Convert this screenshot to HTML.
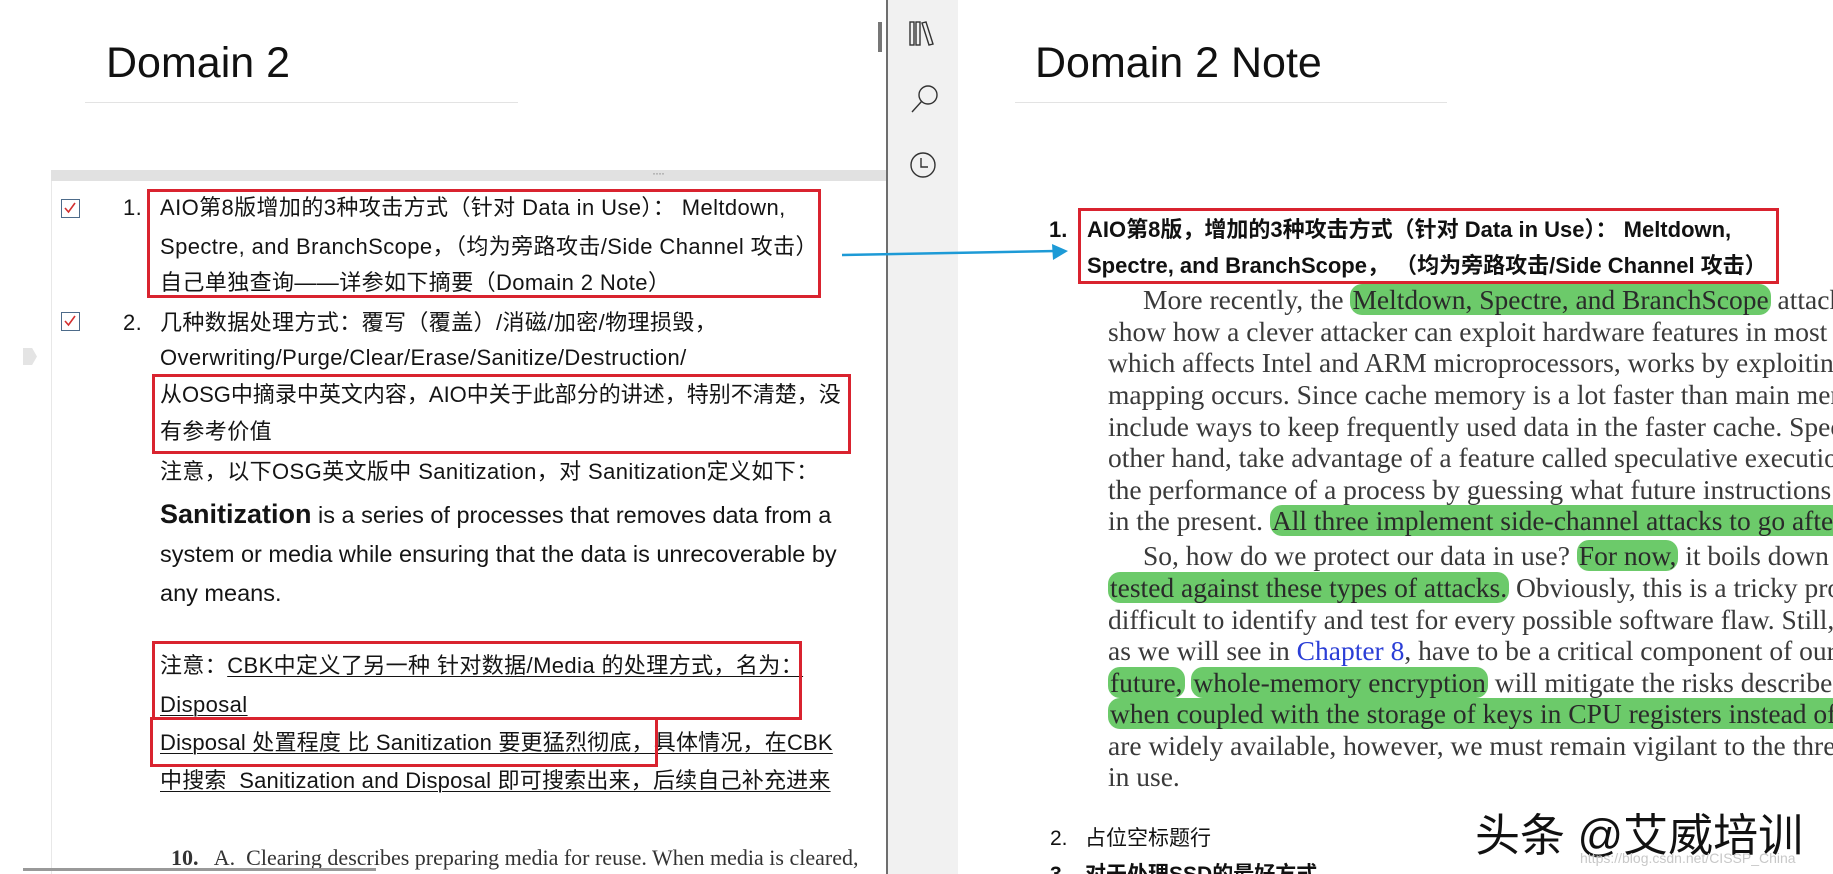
<!DOCTYPE html>
<html><head><meta charset="utf-8">
<style>
*{margin:0;padding:0;box-sizing:border-box}
body{width:1833px;height:874px;overflow:hidden;background:#fff;position:relative;font-family:"Liberation Sans","Noto Sans CJK SC",sans-serif;color:#111}
.a{position:absolute;white-space:nowrap}
.l{position:absolute;left:160px;font-size:22px;letter-spacing:0.4px;line-height:30px;white-space:nowrap;color:#141414}
.box{position:absolute;border:3px solid #d9232f}
.s{position:absolute;left:1108px;font-family:"Liberation Serif",serif;font-size:27.5px;line-height:30px;color:#3a3a3a;white-space:nowrap}
.g{background:#6cca6a;border-radius:12px;padding:0 2px;color:#2a2a2a}
.cb{position:absolute;left:61px;width:19px;height:19px;border:1.5px solid #4d6b8a;background:#fff}
u{text-decoration-thickness:1px;text-underline-offset:3px}
</style></head><body>
<div class="a" style="left:106px;top:38px;font-size:43px;line-height:50px;color:#111">Domain 2</div>
<div class="a" style="left:85px;top:102px;width:433px;height:1px;background:#e3e3e3"></div>
<div class="a" style="left:878px;top:22px;width:4px;height:30px;background:#777"></div>
<div class="a" style="left:51px;top:170px;width:836px;height:11px;background:#e1e1e1"></div>
<div class="a" style="left:652px;top:166px;font-size:12px;color:#888;letter-spacing:-1px">····</div>
<div class="a" style="left:51px;top:181px;width:1px;height:693px;background:#e8e8e8"></div>
<div class="a" style="left:23px;top:348px;width:14px;height:17px;background:#e4e4e4;clip-path:polygon(0 0,65% 0,100% 50%,65% 100%,0 100%)"></div>

<div class="cb" style="top:199px"><svg width="16" height="16" viewBox="0 0 16 16" style="position:absolute;left:0;top:0"><path d="M3 8 L6.5 12 L13 3" stroke="#d32f2f" stroke-width="1.6" fill="none"/></svg></div>
<div class="cb" style="top:312px"><svg width="16" height="16" viewBox="0 0 16 16" style="position:absolute;left:0;top:0"><path d="M3 8 L6.5 12 L13 3" stroke="#d32f2f" stroke-width="1.6" fill="none"/></svg></div>
<div class="l" style="left:123px;top:193px">1.</div>
<div class="l" style="left:123px;top:308px">2.</div>

<div class="l" style="top:193px">AIO第8版增加的3种攻击方式（针对 Data in Use）： Meltdown,</div>
<div class="l" style="top:232px">Spectre, and BranchScope，（均为旁路攻击/Side Channel 攻击）</div>
<div class="l" style="top:268px">自己单独查询——详参如下摘要（Domain 2 Note）</div>
<div class="l" style="top:308px">几种数据处理方式：覆写（覆盖）/消磁/加密/物理损毁，</div>
<div class="l" style="top:343px">Overwriting/Purge/Clear/Erase/Sanitize/Destruction/</div>
<div class="l" style="top:380px;letter-spacing:0">从OSG中摘录中英文内容，AIO中关于此部分的讲述，特别不清楚，没</div>
<div class="l" style="top:417px">有参考价值</div>
<div class="l" style="top:457px">注意，以下OSG英文版中 Sanitization，对 Sanitization定义如下：</div>
<div class="l" style="top:499px;font-size:23.5px;letter-spacing:0"><b style="font-size:27px">Sanitization</b> is a series of processes that removes data from a</div>
<div class="l" style="top:539px;font-size:23.5px;letter-spacing:0">system or media while ensuring that the data is unrecoverable by</div>
<div class="l" style="top:578px;font-size:23.5px;letter-spacing:0">any means.</div>
<div class="l" style="top:651px">注意：<u>CBK中定义了另一种 针对数据/Media 的处理方式，名为：</u></div>
<div class="l" style="top:690px"><u>Disposal</u></div>
<div class="l" style="top:728px;letter-spacing:0.2px"><u>Disposal 处置程度 比 Sanitization 要更猛烈彻底，具体情况，在CBK</u></div>
<div class="l" style="top:766px;letter-spacing:0.2px"><u>中搜索&nbsp; Sanitization and Disposal 即可搜索出来，后续自己补充进来</u></div>

<div class="box" style="left:147px;top:189px;width:674px;height:109px"></div>
<div class="box" style="left:152px;top:374px;width:699px;height:80px"></div>
<div class="box" style="left:152px;top:641px;width:650px;height:79px"></div>
<div class="box" style="left:150px;top:717px;width:508px;height:50px"></div>

<div class="a" style="left:171px;top:845px;font-family:'Liberation Serif',serif;font-size:22px;color:#333"><b>10.</b>&nbsp;&nbsp; A.&nbsp; Clearing describes preparing media for reuse. When media is cleared,</div>
<div class="a" style="left:23px;top:868px;width:353px;height:3px;background:#999"></div>

<div class="a" style="left:886px;top:0;width:2px;height:874px;background:#6e6e6e"></div>
<div class="a" style="left:888px;top:0;width:70px;height:874px;background:#f1f1f1"></div>
<svg class="a" style="left:900px;top:15px" width="50" height="190" viewBox="0 0 50 190">
 <g fill="none" stroke="#333" stroke-width="1.4">
  <rect x="10" y="7" width="4" height="23"/><rect x="16" y="7" width="4" height="23"/>
  <path d="M22 8 L26 7 L33 29 L29 30 Z"/>
  <circle cx="28" cy="80" r="9"/><path d="M21.5 86.5 L12 97"/>
  <circle cx="23" cy="150" r="12"/><path d="M21 143 V152 H28"/>
 </g>
</svg>

<div class="a" style="left:1035px;top:38px;font-size:43px;line-height:50px;color:#111">Domain 2 Note</div>
<div class="a" style="left:1015px;top:102px;width:432px;height:1px;background:#e3e3e3"></div>

<svg class="a" style="left:838px;top:240px" width="235" height="25" viewBox="0 0 235 25"><path d="M4 15 L218 11" stroke="#1d9ad6" stroke-width="2.5"/><path d="M214 4 L230 11 L215 20 Z" fill="#1d9ad6"/></svg>

<div class="a" style="left:1049px;top:215px;font-size:22px;line-height:30px;font-weight:bold">1.</div>
<div class="a" style="left:1087px;top:215px;font-size:22px;line-height:30px;font-weight:bold">AIO第8版，增加的3种攻击方式（针对 Data in Use）： Meltdown,</div>
<div class="a" style="left:1087px;top:251px;font-size:22px;line-height:30px;font-weight:bold">Spectre, and BranchScope， （均为旁路攻击/Side Channel 攻击）</div>
<div class="box" style="left:1078px;top:208px;width:701px;height:76px"></div>

<div style="position:absolute;left:0;top:0;width:1833px;height:874px;overflow:hidden">
<div class="s" style="top:285px;left:1143px">More recently, the <span class="g">Meltdown, Spectre, and BranchScope</span> attacks</div>
<div class="s" style="top:317px">show how a clever attacker can exploit hardware features in most</div>
<div class="s" style="top:348px">which affects Intel and ARM microprocessors, works by exploiting</div>
<div class="s" style="top:380px">mapping occurs. Since cache memory is a lot faster than main memory</div>
<div class="s" style="top:412px">include ways to keep frequently used data in the faster cache. Spectre</div>
<div class="s" style="top:443px">other hand, take advantage of a feature called speculative execution</div>
<div class="s" style="top:475px">the performance of a process by guessing what future instructions</div>
<div class="s" style="top:506px">in the present. <span class="g">All three implement side-channel attacks to go after data</span></div>
<div class="s" style="top:541px;left:1143px">So, how do we protect our data in use? <span class="g">For now,</span> it boils down to</div>
<div class="s" style="top:573px"><span class="g">tested against these types of attacks.</span> Obviously, this is a tricky problem</div>
<div class="s" style="top:605px">difficult to identify and test for every possible software flaw. Still,</div>
<div class="s" style="top:636px">as we will see in <span style="color:#2b3ed6">Chapter 8</span>, have to be a critical component of our</div>
<div class="s" style="top:668px"><span class="g">future,</span> <span class="g">whole-memory encryption</span> will mitigate the risks described</div>
<div class="s" style="top:699px"><span class="g">when coupled with the storage of keys in CPU registers instead of RAM</span></div>
<div class="s" style="top:731px">are widely available, however, we must remain vigilant to the threats</div>
<div class="s" style="top:762px">in use.</div>

<div class="a" style="left:1050px;top:824px;font-size:21px;line-height:30px">2.&nbsp;&nbsp; 占位空标题行</div>
<div class="a" style="left:1050px;top:860px;font-size:21px;line-height:30px;font-weight:bold">3.&nbsp;&nbsp; 对于处理SSD的最好方式</div>
<div class="a" style="left:1475px;top:808px;font-size:45px;line-height:56px;color:#111;text-shadow:0 0 3px #fff,1px 1px 0 #fff">头条 @艾威培训</div>
<div class="a" style="left:1580px;top:850px;font-size:14px;color:#c8c8c8">https://blog.csdn.net/CISSP_China</div>
</div>
</body></html>
